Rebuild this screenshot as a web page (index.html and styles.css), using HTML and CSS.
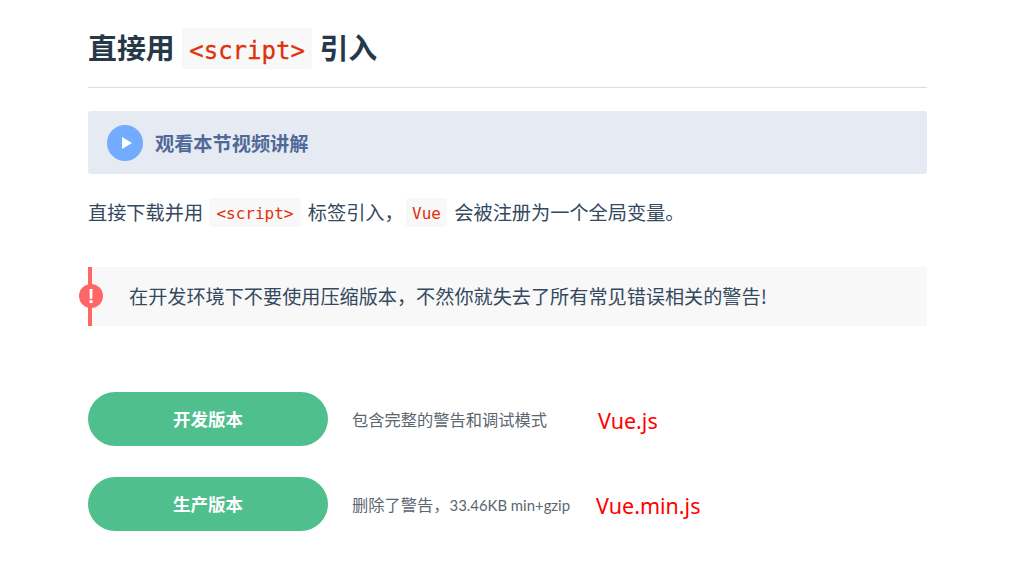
FILE: index.html
```html
<!DOCTYPE html>
<html lang="zh">
<head>
<meta charset="utf-8">
<title>直接用 script 引入</title>
<link rel="stylesheet" href="styles.css">
</head>
<body>
<main class="page">
  <h2 class="title">直接用 <code class="code-lg">&lt;script&gt;</code> 引入</h2>
  <a class="video"><span class="play"><svg width="10" height="12" viewBox="0 0 10 12"><path d="M0 0 10 6 0 12Z" fill="#fff"/></svg></span><span>观看本节视频讲解</span></a>
  <p class="intro">直接下载并用 <code class="code-sm code-script">&lt;script&gt;</code> 标签引入， <code class="code-sm code-vue">Vue</code> 会被注册为一个全局变量。</p>
  <div class="warn"><span class="warn-icon">!</span>在开发环境下不要使用压缩版本，不然你就失去了所有常见错误相关的警告!</div>
  <div class="row row-first">
    <a class="btn">开发版本</a><span class="desc">包含完整的警告和调试模式</span><span class="note note-a">Vue.js</span>
  </div>
  <div class="row row-second">
    <a class="btn">生产版本</a><span class="desc">删除了警告，<span class="desc-latin">33.46KB min+gzip</span></span><span class="note note-b">Vue.min.js</span>
  </div>
</main>
</body>
</html>
```
FILE: styles.css
```css
* { box-sizing: border-box; }
html, body { margin: 0; background: #fff; overflow: hidden; }
body {
  height: 586px;
  font-family: "Noto Sans", "Noto Sans CJK SC", sans-serif;
  color: #304455;
}
.page { width: 839px; margin-left: 88px; }
.title {
  margin: 0;
  height: 88px;
  padding-top: 28px;
  font-family: "Noto Sans CJK SC", sans-serif;
  font-size: 28.9px;
  line-height: 37px;
  font-weight: 700;
  color: #273849;
  border-bottom: 1px solid #ddd;
  white-space: pre;
}
.code-lg {
  display: inline-block;
  margin: 0 1px 0 1px;
  font-family: "DejaVu Sans Mono", monospace;
  font-size: 24px;
  font-weight: 400;
  line-height: 47px;
  height: 41px;
  padding: 0 7px;
  color: #e0310b;
  -webkit-text-stroke: 0.3px #e0310b;
  background: #f8f8f8;
  border-radius: 3px;
  vertical-align: top;
}
.video {
  display: flex;
  align-items: center;
  gap: 12px;
  height: 63px;
  margin-top: 23px;
  padding-left: 19px;
  background: #e6eaf2;
  border-radius: 3px;
  font-family: "Noto Sans CJK SC", sans-serif;
  font-size: 19.2px;
  font-weight: 700;
  color: #4f6a98;
}
.play {
  display: flex;
  align-items: center;
  justify-content: center;
  width: 36px;
  height: 36px;
  padding-left: 4px;
  border-radius: 50%;
  background: #73abfe;
}
.intro {
  margin: 0;
  height: 93px;
  padding-top: 24px;
  font-family: "Noto Sans CJK SC", sans-serif;
  font-size: 19.2px;
  line-height: 29px;
  white-space: pre;
  color: #34495e;
}
.code-sm {
  display: inline-block;
  height: 29px;
  padding: 0 7px;
  font-family: "DejaVu Sans Mono", monospace;
  font-size: 16px;
  line-height: 31px;
  color: #e0310b;
  background: #f8f8f8;
  border-radius: 3px;
  vertical-align: top;
}
.code-script { margin: 0 3px 0 2px; }
.code-vue { margin: 0 3px 0 -2px; padding: 0 6px; }
.warn {
  position: relative;
  height: 59px;
  padding-left: 37px;
  background: #f8f8f8;
  border-left: 4px solid #f66;
  font-family: "Noto Sans CJK SC", sans-serif;
  font-size: 19.15px;
  line-height: 59px;
  white-space: nowrap;
  color: #34495e;
}
.warn-icon {
  position: absolute;
  left: -13px;
  top: 17px;
  width: 24px;
  height: 24px;
  border-radius: 50%;
  background: #f66;
  color: #fff;
  font-family: "Liberation Sans", sans-serif;
  font-size: 20px;
  font-weight: 700;
  line-height: 24px;
  text-align: center;
}
.row { display: flex; align-items: center; height: 54px; }
.row-first { margin-top: 66px; }
.row-second { margin-top: 31px; }
.btn {
  flex: none;
  width: 240px;
  height: 54px;
  border-radius: 27px;
  background: #4fc08d;
  color: #fff;
  font-family: "Noto Sans CJK SC", sans-serif;
  font-size: 17.5px;
  font-weight: 700;
  line-height: 54px;
  text-align: center;
}
.desc {
  flex: none;
  margin-left: 24px;
  font-family: "Lato", "Noto Sans CJK SC", sans-serif;
  font-size: 16.25px;
  color: #5b6670;
}
.desc-latin { font-size: 14.9px; }
.note {
  position: relative;
  top: 1px;
  font-family: "Noto Sans", sans-serif;
  font-size: 21.5px;
  color: #ff0000;
}
.note-a { margin-left: 51px; }
.note-b { margin-left: 26px; }
```
